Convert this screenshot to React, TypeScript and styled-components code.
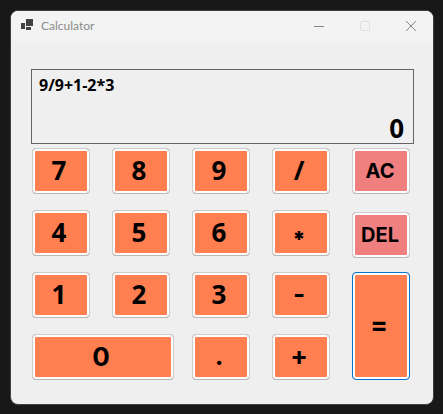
import React from "react";
import styled, { createGlobalStyle, css } from "styled-components";

const GlobalStyle = createGlobalStyle`
  * { box-sizing: border-box; }
  body { margin: 0; background: #181818; font-family: "Open Sans", "Noto Sans", sans-serif; }
`;

const Desktop = styled.main`
  min-height: 100vh;
  padding: 10px 9px 9px 10px;
`;

const AppWindow = styled.section`
  border: 1px solid #404040;
  border-radius: 8px;
  background: #efefef;
  overflow: hidden;
`;

const TitleBar = styled.header`
  display: flex;
  align-items: center;
  height: 30px;
  padding-left: 10px;
  background: #f3f3f3;
`;

const AppIcon = styled.svg`
  display: block;
  margin-bottom: 2px;
`;

const Title = styled.h1`
  flex: 1;
  margin: 0 0 0 8px;
  font-family: Lato, "Open Sans", sans-serif;
  font-size: 12px;
  line-height: 16px;
  font-weight: 400;
  color: #8c8c8c;
`;

const CaptionButton = styled.button`
  display: grid;
  place-items: center;
  width: 46px;
  height: 30px;
  padding: 0 0 0 2px;
  border: 0;
  background: transparent;
  color: #858585;

  &:disabled { color: #dedede; }
`;

const Content = styled.div`
  padding: 28px 19px 24px 20px;
`;

const Display = styled.div`
  display: flex;
  flex-direction: column;
  justify-content: space-between;
  height: 75px;
  padding: 5px 9px 0 7px;
  border: 1px solid #646464;
  color: #000;
  font-weight: 700;
`;

const Expression = styled.div`
  font-size: 16px;
  line-height: 20px;
`;

const Result = styled.output`
  align-self: flex-end;
  font-size: 26px;
  line-height: 30px;
`;

const Keypad = styled.div`
  display: grid;
  grid-template-columns: repeat(5, 1fr);
  grid-auto-rows: 46px;
  gap: 16px 22px;
  padding: 4px 4px 0 1px;
`;

type KeyKind = "digit" | "operator" | "divide" | "multiply" | "zero" | "equals" | "clear" | "delete";

const Key = styled.button<{ $kind: KeyKind }>`
  min-width: 0;
  padding: 0 4px 2px 0;
  border: 1px solid #cdcdcd;
  border-bottom-color: #b8b8b8;
  border-radius: 4px;
  background: #ff7f50;
  box-shadow: inset 0 0 0 2px #fdfdfd;
  color: #000;
  font-family: Inter, "Liberation Sans", sans-serif;
  font-size: 26px;
  line-height: 32px;
  font-weight: 700;

  ${({ $kind }) => $kind === "digit" && css`
    font-family: "Open Sans", sans-serif;
  `}
  ${({ $kind }) => $kind === "divide" && css`
    font-family: "Open Sans", sans-serif;
  `}
  ${({ $kind }) => $kind === "multiply" && css`
    padding-top: 12px;
    font-size: 22px;
    font-weight: 900;
  `}
  ${({ $kind }) => $kind === "zero" && css`
    grid-column: span 2;
    margin-right: -4px;
    padding-bottom: 0;
  `}
  ${({ $kind }) => $kind === "equals" && css`
    grid-column: 5;
    grid-row: 3 / span 2;
    border-color: #0078d4;
  `}
  ${({ $kind }) => ($kind === "clear" || $kind === "delete") && css`
    padding: 0 2px 0 0;
    background: #f08080;
    font-size: 20px;
  `}
  ${({ $kind }) => $kind === "delete" && css`
    margin: 2px 0 -2px;
  `}
`;

const keys: { label: string; kind?: KeyKind; name?: string }[] = [
  { label: "7" }, { label: "8" }, { label: "9" }, { label: "/", kind: "divide", name: "Divide" }, { label: "AC", kind: "clear" },
  { label: "4" }, { label: "5" }, { label: "6" }, { label: "*", kind: "multiply", name: "Multiply" }, { label: "DEL", kind: "delete" },
  { label: "1" }, { label: "2" }, { label: "3" }, { label: "-", kind: "operator", name: "Subtract" }, { label: "=", kind: "equals", name: "Equals" },
  { label: "0", kind: "zero" }, { label: ".", kind: "operator", name: "Decimal point" }, { label: "+", kind: "operator", name: "Add" },
];

const FormIcon = () => (
  <AppIcon width="12" height="12" viewBox="0 0 12 12" fill="#414141" shapeRendering="crispEdges" aria-hidden="true">
    <path d="M5 0h7v7H5zM0 4h4v6H0zM5 8h5v3H5z" />
  </AppIcon>
);

export default function App() {
  return (
    <>
      <GlobalStyle />
      <Desktop>
        <AppWindow>
          <TitleBar>
            <FormIcon />
            <Title>Calculator</Title>
            <CaptionButton aria-label="Minimize">
              <svg width="10" height="10" stroke="currentColor" aria-hidden="true"><path d="M0 5.5h10" /></svg>
            </CaptionButton>
            <CaptionButton aria-label="Maximize" disabled>
              <svg width="10" height="10" fill="none" stroke="currentColor" aria-hidden="true"><rect x=".5" y=".5" width="9" height="9" rx="1" /></svg>
            </CaptionButton>
            <CaptionButton aria-label="Close">
              <svg width="10" height="10" stroke="currentColor" aria-hidden="true"><path d="M0 0l10 10M10 0L0 10" /></svg>
            </CaptionButton>
          </TitleBar>
          <Content>
            <Display>
              <Expression>9/9+1-2*3</Expression>
              <Result>0</Result>
            </Display>
            <Keypad>
              {keys.map(({ label, kind = "digit", name }) => (
                <Key key={label} $kind={kind} aria-label={name}>{label}</Key>
              ))}
            </Keypad>
          </Content>
        </AppWindow>
      </Desktop>
    </>
  );
}
